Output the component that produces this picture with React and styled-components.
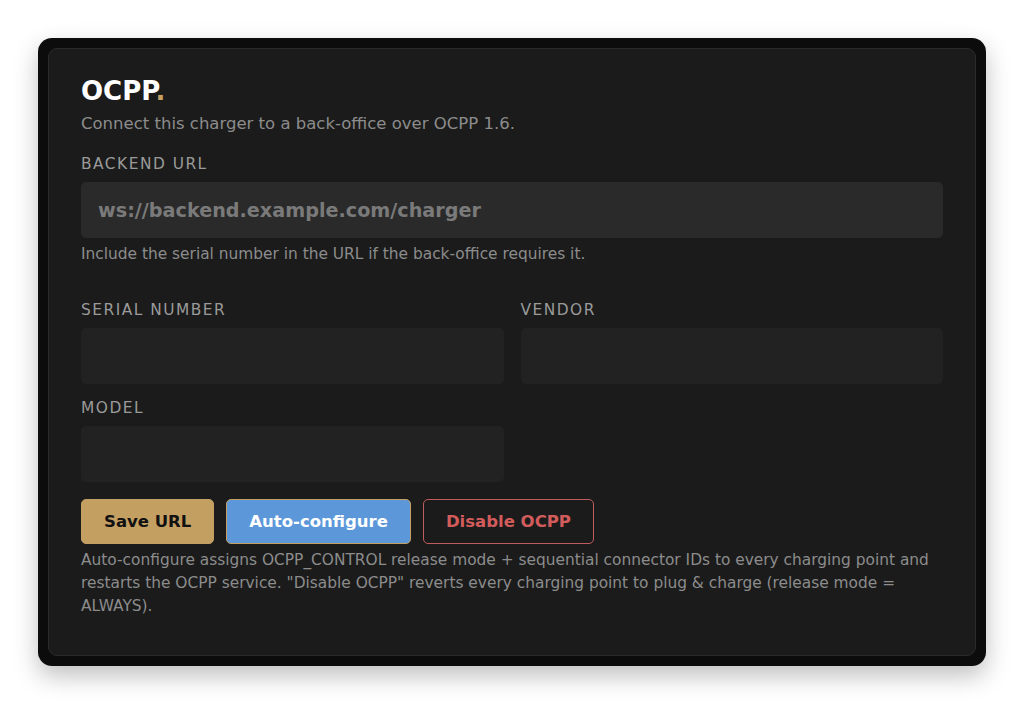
import React from "react";
import styled, { createGlobalStyle } from "styled-components";

const Global = createGlobalStyle`
  body {
    margin: 0;
    background: #ffffff;
    font-family: "DejaVu Sans", sans-serif;
  }
`;

const Page = styled.div`
  padding: 38px;
`;

const Frame = styled.div`
  background: #0c0c0c;
  border-radius: 14px;
  padding: 10px;
  box-shadow: 0 10px 24px rgba(0, 0, 0, 0.25);
`;

const Card = styled.div`
  background: #1b1b1b;
  border: 1px solid #2b2b2b;
  border-radius: 9px;
  padding: 25px 32px 32px;
  min-height: 608px;
  box-sizing: border-box;
`;

const Title = styled.h1`
  margin: 0;
  font-size: 26px;
  font-weight: bold;
  color: #ffffff;
  line-height: 34px;
  span { color: #c7a062; }
`;

const Sub = styled.p`
  margin: 6px 0 0;
  font-size: 16.5px;
  color: #8c8c8c;
`;

const Label = styled.div`
  font-size: 15.4px;
  letter-spacing: 1.5px;
  color: #9a9a9a;
  margin: ${(p) => p.$top || 22}px 0 9px;
`;

const Input = styled.input`
  display: block;
  width: 100%;
  box-sizing: border-box;
  height: 56px;
  border: none;
  border-radius: 5px;
  outline: none;
  background: ${(p) => (p.$dim ? "#222222" : "#2a2a2a")};
  padding: 0 17px;
  font-family: inherit;
  font-size: 19.2px;
  font-weight: bold;
  color: #7a7a7a;
  &::placeholder { color: #7a7a7a; }
`;

const Help = styled.p`
  margin: 7px 0 0;
  font-size: 15.4px;
  color: #8c8c8c;
`;

const Grid = styled.div`
  display: grid;
  grid-template-columns: 1fr 1fr;
  column-gap: 17px;
  margin-top: 26px;
`;

const Buttons = styled.div`
  display: flex;
  gap: 12px;
  margin-top: 17px;
`;

const Button = styled.button`
  height: 45px;
  padding: 0 22px;
  border-radius: 5px;
  font-family: inherit;
  font-size: 16.5px;
  font-weight: bold;
  border: 1px solid ${(p) => p.$border};
  background: ${(p) => p.$bg};
  color: ${(p) => p.$color};
`;

const Note = styled.p`
  margin: 5px 0 0;
  font-size: 15.4px;
  line-height: 23px;
  color: #8c8c8c;
`;

export default function App() {
  return (
    <Page>
      <Global />
      <Frame>
        <Card>
          <Title>
            OCPP<span>.</span>
          </Title>
          <Sub>Connect this charger to a back-office over OCPP 1.6.</Sub>
          <Label $top={22}>BACKEND URL</Label>
          <Input placeholder="ws://backend.example.com/charger" />
          <Help>Include the serial number in the URL if the back-office requires it.</Help>
          <Grid>
            <div>
              <Label $top={12}>SERIAL NUMBER</Label>
              <Input $dim />
            </div>
            <div>
              <Label $top={12}>VENDOR</Label>
              <Input $dim />
            </div>
            <div>
              <Label $top={15}>MODEL</Label>
              <Input $dim />
            </div>
          </Grid>
          <Buttons>
            <Button $bg="#c49f62" $border="#c49f62" $color="#111">Save URL</Button>
            <Button $bg="#5b97d9" $border="#c49f62" $color="#fff">Auto-configure</Button>
            <Button $bg="transparent" $border="#c05c5c" $color="#d25c5c">Disable OCPP</Button>
          </Buttons>
          <Note>
            Auto-configure assigns OCPP_CONTROL release mode + sequential connector IDs to every charging point and
            restarts the OCPP service. "Disable OCPP" reverts every charging point to plug &amp; charge (release mode =
            ALWAYS).
          </Note>
        </Card>
      </Frame>
    </Page>
  );
}
